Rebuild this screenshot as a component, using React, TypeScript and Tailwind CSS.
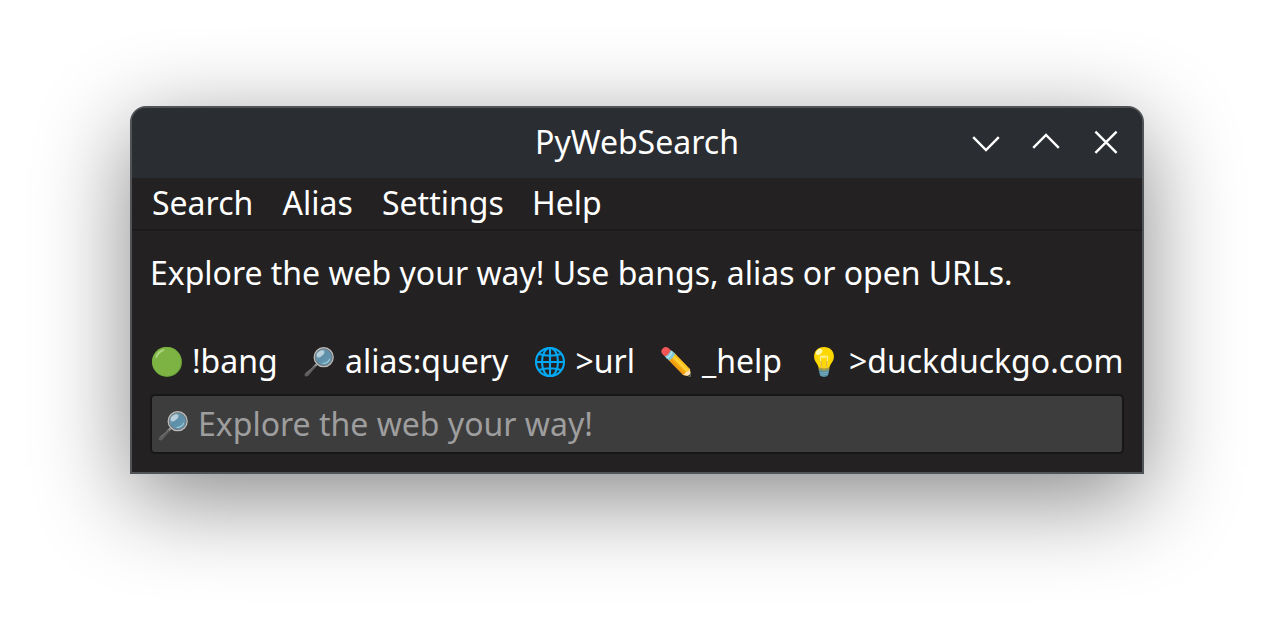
import type { ReactNode } from "react";

const Magnifier = ({ id }: { id: string }) => (
  <svg width="32" height="32" viewBox="0 0 32 32" className="shrink-0">
    <defs>
      <linearGradient id={id} x1="0" y1="0" x2="1" y2="1">
        <stop offset="0" stopColor="#8ab7c9" />
        <stop offset="0.45" stopColor="#5e8fa8" />
        <stop offset="1" stopColor="#689ab2" />
      </linearGradient>
    </defs>
    <path d="M13.5 18.5 10.5 21.5" stroke="#9a9a9a" strokeWidth="2.4" />
    <path d="M11.8 19.4 3 26.4Q.6 28.4 2 29.9T5.6 29.5L13 20.8Z" fill="#5d5d5d" />
    <path d="M11.6 19.8 3.4 27.2" stroke="#7b7b7b" strokeWidth="0.8" />
    <circle cx="20.7" cy="11.2" r="9.4" fill={`url(#${id})`} stroke="#bcbcbc" strokeWidth="1.5" />
    <circle cx="20.7" cy="11.2" r="8.4" fill="none" stroke="#716c6c" strokeWidth="0.8" />
    <ellipse cx="17.5" cy="7.8" rx="4.4" ry="2.6" transform="rotate(-38 17.5 7.8)" fill="#e0edf2" opacity="0.65" />
    <path d="M20 17.5Q25 16.8 26.5 13.4" stroke="#96cbdc" strokeWidth="1.2" fill="none" strokeLinecap="round" />
  </svg>
);

const GreenCircle = () => (
  <svg width="32" height="32" viewBox="0 0 32 32" className="shrink-0">
    <circle cx="16" cy="16" r="15" fill="#689f38" />
    <ellipse cx="15.6" cy="15.5" rx="14.5" ry="14.4" fill="#7cb342" />
    <path d="M4.4 11.5Q5.5 5 12 3.2Q14.7 2.9 13 4.8Q8 7 6 11.5Q4.8 13 4.4 11.5Z" fill="#aed581" />
  </svg>
);

const Globe = () => (
  <svg width="32" height="32" viewBox="0 0 32 32" className="shrink-0" fill="none" stroke="#03a9f4" strokeWidth="2.1">
    <circle cx="16" cy="16" r="14" />
    <ellipse cx="16" cy="16" rx="8" ry="14" />
    <path d="M16 2v28M2 16h28M4.7 8Q16 11.5 27.3 8M4.7 24Q16 20.5 27.3 24" />
  </svg>
);

const Pencil = () => (
  <svg width="32" height="32" viewBox="0 0 32 32" className="shrink-0">
    <path d="M8.1 13.4 14 6.6 30 23 31 30.7 23.3 29Z" fill="#fbc11b" />
    <path d="M12.7 8.2 29.2 25 27.4 26.8 11 10.2Z" fill="#fdd03a" />
    <path d="M8.1 13.4 10 11.2 26.4 28 24.4 29.4 23.3 29Z" fill="#f29a10" />
    <path d="M10.7 10.7 27 27.4" stroke="#e59600" strokeWidth="0.6" />
    <path d="M22.4 28.4Q25.4 28.4 25.7 26Q28.8 26.3 29.6 22.6L31 30.7Z" fill="#ffe0b2" />
    <path d="M27 30 31 30.9 30.4 26.8Q29.9 29.5 27 30Z" fill="#3b4549" />
    <path d="M2.2 7.8 8.1 1.8 11.6 5Q10.8 9 5.8 11.3Z" fill="#ef5350" />
    <path d="M2.2 7.8Q.2 5 2.7 2.5T8.1 1.8L9.4 3.1Q5.8 4 3.6 9Z" fill="#f0575b" />
    <path d="M4.6 10.3Q8.7 9 10.8 3.9L15.3 7.8Q13.4 12.3 9.1 14.6Z" fill="#82c9d8" />
    <path d="M6.3 12.2Q10.7 10 12.2 5.2" stroke="#bae7eb" strokeWidth="1.2" fill="none" />
  </svg>
);

const Bulb = () => (
  <svg width="32" height="32" viewBox="0 0 32 32" className="shrink-0">
    <path d="M10.7 24H21.3L20.2 29Q19 31 16 31T11.8 29Z" fill="#508fa5" />
    <path d="M12 27.2 20.4 26M12.6 29.3 20 27.9" stroke="#82aebe" strokeWidth="1" />
    <path d="M16 1C10 1 6.1 5 6.1 10.4C6.1 16.4 10.8 17.7 10.8 23.4Q16 25 21.2 23.4C21.2 17.7 25.9 16.4 25.9 10.4C25.9 5 22 1 16 1Z" fill="#fdd800" />
    <path d="M10.9 21.6Q16 23.2 21.1 21.6V24Q16 25.6 10.9 24Z" fill="#a79a4c" />
    <path d="M14 22 12.2 11.5Q13.3 8.5 14.2 11.3Q15.1 8.5 16 11.3Q16.9 8.5 17.8 11.3Q18.8 8.5 19.8 11.5L18 22" fill="none" stroke="#fff19b" strokeWidth="1.1" />
    <path d="M14 22 13 15M18 22 19 15" stroke="#d99a22" strokeWidth="0.8" />
    <ellipse cx="11.2" cy="5.9" rx="3.7" ry="2.4" transform="rotate(-42 11.2 5.9)" fill="#fff9ae" />
  </svg>
);

const Hint = ({ icon, text, gap, className }: { icon: ReactNode; text: string; gap: string; className: string }) => (
  <div className={`flex shrink-0 items-center ${className}`}>
    <span className="pt-0.5">{icon}</span>
    <span className={gap}>{text}</span>
  </div>
);

const menus = [
  { label: "Search", className: "w-[130.5px]" },
  { label: "Alias", className: "w-[99.5px]" },
  { label: "Settings", className: "w-[150px]" },
  { label: "Help", className: "w-[100px]" },
];

export default function App() {
  return (
    <div className="flex h-[628px] w-[1274px] justify-center overflow-hidden bg-white pt-[106px] font-['Noto_Sans',sans-serif] text-[32px] whitespace-nowrap text-white">
      <main className="flex h-[368px] w-[1014px] flex-col overflow-hidden rounded-t-[16px] border-2 border-[#505457] bg-[#232122] shadow-[0_24px_94px_rgba(0,0,0,0.48)]">
        <header className="grid h-[70px] shrink-0 grid-cols-[1fr_auto_1fr] items-center bg-[#2a2d32]">
          <span />
          <h1 className="pb-0.5 leading-[68px]">PyWebSearch</h1>
          <div className="flex justify-end gap-7 pr-5">
            <svg width="32" height="32" viewBox="0 0 32 32" fill="none" stroke="#fff" strokeWidth="2.4">
              <path d="M3.2 10.2 16 23 28.8 10.2" />
            </svg>
            <svg width="32" height="32" viewBox="0 0 32 32" fill="none" stroke="#fff" strokeWidth="2.4">
              <path d="M3.2 20.8 16 8 28.8 20.8" />
            </svg>
            <svg width="32" height="32" viewBox="0 0 32 32" fill="none" stroke="#fff" strokeWidth="2.4">
              <path d="M5.4 4.6 26.6 25.8M26.6 4.6 5.4 25.8" />
            </svg>
          </div>
        </header>
        <nav className="flex h-[53px] shrink-0 border-b-2 border-[#1d1b1c] pl-5 leading-[49px]">
          {menus.map((m) => (
            <span key={m.label} className={m.className}>{m.label}</span>
          ))}
        </nav>
        <section className="flex grow flex-col px-[18px]">
          <p className="mt-[18px] h-12 leading-[48px] tracking-[-0.02px]">Explore the web your way! Use bangs, alias or open URLs.</p>
          <div className="mt-10 ml-px flex h-12 leading-[48px]">
            <Hint className="w-[152px]" gap="ml-[9px]" icon={<GreenCircle />} text="!bang" />
            <Hint className="w-[231px]" gap="ml-[10px]" icon={<Magnifier id="lens-hint" />} text="alias:query" />
            <Hint className="w-[126px]" gap="ml-[9.5px]" icon={<Globe />} text=">url" />
            <Hint className="w-[148px]" gap="ml-[10px]" icon={<Pencil />} text="_help" />
            <Hint className="" gap="ml-[9px]" icon={<Bulb />} text=">duckduckgo.com" />
          </div>
          <div className="mt-[9px] flex h-[60px] items-center rounded-[5px] border-2 border-[#171717] bg-[#3d3d3d] pl-[5px] text-[#9e9e9e]">
            <span className="pt-[3px]"><Magnifier id="lens-field" /></span>
            <span className="ml-[9px] leading-[50px]">Explore the web your way!</span>
          </div>
        </section>
      </main>
    </div>
  );
}
